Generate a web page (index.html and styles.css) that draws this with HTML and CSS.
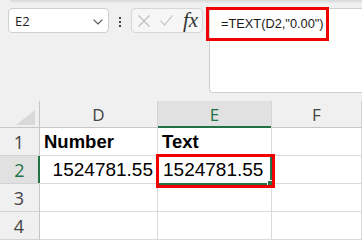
FILE: index.html
```html
<!DOCTYPE html>
<html>
<head>
<meta charset="utf-8">
<link rel="stylesheet" href="styles.css">
</head>
<body>
<div class="ribbon-edge"></div>
<div class="toolbar">
  <div class="namebox">
    <span class="name">E2</span>
    <svg class="chev" width="10" height="6" viewBox="0 0 10 6"><path d="M0.6 0.6 L5 5 L9.4 0.6" fill="none" stroke="#555" stroke-width="1.2"/></svg>
  </div>
  <div class="grip"><i></i><i></i><i></i></div>
  <div class="fbtns">
    <svg class="ico-x" width="12" height="12" viewBox="0 0 12 12"><path d="M0.5 0.5 L11.5 11.5 M11.5 0.5 L0.5 11.5" fill="none" stroke="#bdbdbd" stroke-width="1.1"/></svg>
    <svg class="ico-ok" width="13" height="11" viewBox="0 0 13 11"><path d="M0.5 5.5 L4.5 10 L12.5 0.5" fill="none" stroke="#bdbdbd" stroke-width="1.1"/></svg>
    <span class="fx">fx</span>
  </div>
  <div class="formula">
    <span class="ftext">=TEXT(D2,"0.00")</span>
    <div class="mark mark-formula"></div>
  </div>
</div>
<div class="sheet">
  <div class="hdr corner"><svg width="19" height="15" viewBox="0 0 19 15"><path d="M19 0 L19 15 L0 15 Z" fill="#d9d9d9"/></svg></div>
  <div class="hdr col">D</div>
  <div class="hdr col sel-col">E</div>
  <div class="hdr col">F</div>

  <div class="hdr row">1</div>
  <div class="cell bold">Number</div>
  <div class="cell bold">Text</div>
  <div class="cell"></div>

  <div class="hdr row sel-row">2</div>
  <div class="cell num">1524781.55</div>
  <div class="cell num-text active">1524781.55<div class="selbox"></div><div class="handle"></div><div class="mark mark-cell"></div></div>
  <div class="cell"></div>

  <div class="hdr row">3</div>
  <div class="cell"></div>
  <div class="cell"></div>
  <div class="cell"></div>

  <div class="hdr row">4</div>
  <div class="cell"></div>
  <div class="cell"></div>
  <div class="cell"></div>
</div>
</body>
</html>
```

FILE: styles.css
```css
html, body {
  margin: 0;
  padding: 0;
  background: #f0f0f0;
  overflow: hidden;
  width: 362px;
  height: 240px;
}

.ribbon-edge {
  height: 3px;
  margin-left: 10px;
  background: linear-gradient(#d8d8d8, #ebebeb);
  border-bottom-left-radius: 3px;
}

.toolbar {
  display: flex;
  align-items: flex-start;
  margin-top: 5px;
  padding-left: 8px;
  height: 85px;
}

.namebox {
  box-sizing: border-box;
  width: 101px;
  height: 25px;
  background: #fff;
  border: 1px solid #cfcfcf;
  border-radius: 4px;
  display: flex;
  align-items: center;
  padding: 0 5px 0 6px;
}

.name {
  font-family: "Open Sans", sans-serif;
  font-size: 13px;
  color: #1f1f1f;
}

.chev {
  margin-left: auto;
  margin-top: 2px;
}

.grip {
  width: 22px;
  display: flex;
  flex-direction: column;
  align-items: center;
  gap: 2px;
  padding-top: 9px;
}

.grip i {
  display: block;
  width: 2px;
  height: 2px;
  background: #444;
}

.fbtns {
  box-sizing: border-box;
  width: 72px;
  height: 25px;
  border: 1px solid #d6d6d6;
  border-radius: 4px;
  background: #f6f6f6;
  display: flex;
  align-items: center;
  padding-left: 6px;
}

.ico-ok {
  margin-left: 10px;
}

.fx {
  margin-left: 10px;
  font-family: "Liberation Serif", serif;
  font-style: italic;
  font-size: 21px;
  color: #333;
  line-height: 20px;
  margin-top: -2px;
}

.formula {
  position: relative;
  box-sizing: border-box;
  flex: 1;
  margin-left: 6px;
  height: 85px;
  background: #fff;
  border: 1px solid #cfcfcf;
  border-right: none;
  border-radius: 4px 0 0 4px;
  padding: 5px 0 0 11px;
}

.ftext {
  font-family: "Liberation Sans", sans-serif;
  font-size: 12.8px;
  line-height: 16px;
  color: #1a1a1a;
}

.mark {
  position: absolute;
  box-sizing: border-box;
  border: 3px solid #f00000;
}

.mark-formula {
  left: -4px;
  top: -2px;
  width: 123px;
  height: 34px;
}

.sheet {
  margin-top: 8px;
  display: grid;
  grid-template-columns: 40px 118px 114px 90px;
  grid-template-rows: 27px 28px 28px 28px 28px;
}

.hdr {
  box-sizing: border-box;
  background: #f0f0f0;
  font-family: "Open Sans", sans-serif;
  font-size: 17px;
  color: #444;
  display: flex;
  align-items: center;
  justify-content: center;
}

.corner {
  border-right: 1px solid #c6c6c6;
  border-bottom: 1px solid #c6c6c6;
  justify-content: flex-end;
  align-items: flex-end;
  padding: 0 4px 2px 0;
}

.col {
  border-right: 1px solid #d4d4d4;
  border-bottom: 1px solid #c6c6c6;
}

.row {
  border-right: 1px solid #c6c6c6;
  border-bottom: 1px solid #d4d4d4;
  padding-right: 1px;
  font-size: 18px;
}

.sel-col {
  background: #e1e1e1;
  color: #217346;
  border-bottom: none;
  box-shadow: inset 0 -2px 0 #217346;
}

.sel-row {
  background: #e1e1e1;
  color: #217346;
  border-right: none;
  box-shadow: inset -2px 0 0 #217346;
}

.cell {
  position: relative;
  box-sizing: border-box;
  background: #fff;
  border-right: 1px solid #dadada;
  border-bottom: 1px solid #dadada;
  font-family: "Liberation Sans", sans-serif;
  font-size: 18.5px;
  color: #000;
  display: flex;
  align-items: center;
  padding: 1px 4px 0 4px;
}

.bold {
  font-weight: bold;
}

.num {
  justify-content: flex-end;
  font-size: 19px;
}

.num-text {
  font-size: 19px;
}

.active {
  padding-left: 5px;
  z-index: 2;
}

.selbox {
  position: absolute;
  left: -1px;
  top: -1px;
  right: -1px;
  bottom: -2px;
  border: 2px solid #217346;
}

.handle {
  position: absolute;
  right: -1px;
  bottom: -2px;
  width: 4px;
  height: 4px;
  background: #217346;
  border-left: 1px solid #fff;
  border-top: 1px solid #fff;
}

.mark-cell {
  left: -2px;
  top: -2px;
  width: 119px;
  height: 34px;
}
```
